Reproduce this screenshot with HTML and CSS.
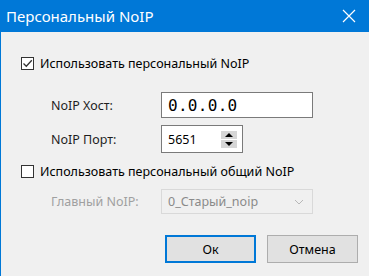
FILE: index.html
```html
<!DOCTYPE html>
<html lang="ru">
<head>
<meta charset="utf-8">
<link rel="stylesheet" href="styles.css">
</head>
<body>
<div class="window">
  <div class="titlebar">
    <span class="title">Персональный NoIP</span>
    <svg class="close" width="16" height="16" viewBox="0 0 16 16"><path d="M2 2 L14 14 M14 2 L2 14" stroke="#fff" stroke-width="1.2" fill="none"/></svg>
  </div>
  <div class="content">
    <label class="check-row first">
      <span class="checkbox"><svg width="11" height="11" viewBox="0 0 11 11"><path d="M1.5 5.5 L4.3 8.3 L9.8 2.2" stroke="#333" stroke-width="1.3" fill="none"/></svg></span>
      <span class="check-label">Использовать персональный NoIP</span>
    </label>
    <div class="field-row host">
      <span class="field-label">NoIP Хост:</span>
      <div class="input ip">0.0.0.0</div>
    </div>
    <div class="field-row port">
      <span class="field-label">NoIP Порт:</span>
      <div class="input spin">
        <span class="spin-value">5651</span>
        <div class="spin-buttons">
          <span class="spin-btn"><svg width="10" height="6" viewBox="0 0 10 6"><path d="M1 5 L5 1 L9 5 Z" fill="#000"/></svg></span>
          <span class="spin-btn"><svg width="10" height="6" viewBox="0 0 10 6"><path d="M1 1 L5 5 L9 1 Z" fill="#000"/></svg></span>
        </div>
      </div>
    </div>
    <label class="check-row second">
      <span class="checkbox"></span>
      <span class="check-label">Использовать персональный общий NoIP</span>
    </label>
    <div class="field-row combo-row">
      <span class="field-label disabled">Главный NoIP:</span>
      <div class="combo">
        <span class="combo-value">0_Старый_noip</span>
        <svg class="chevron" width="10" height="6" viewBox="0 0 10 6"><path d="M1 1 L5 5 L9 1" stroke="#b8b8b8" stroke-width="1" fill="none"/></svg>
      </div>
    </div>
    <div class="buttons">
      <button class="btn default">Ок</button>
      <button class="btn">Отмена</button>
    </div>
  </div>
</div>
</body>
</html>
```

FILE: styles.css
```css
html, body {
  margin: 0;
  padding: 0;
}
body {
  width: 369px;
  height: 276px;
  overflow: hidden;
  background: #f0f0f0;
  font-family: "Noto Sans", "Open Sans", sans-serif;
  font-size: 12px;
  color: #000;
}
.window {
  height: 276px;
  border-left: 1px solid #0078d7;
  box-sizing: border-box;
  display: flex;
  flex-direction: column;
}
.titlebar {
  height: 32px;
  flex: none;
  background: #0078d7;
  display: flex;
  align-items: center;
  justify-content: space-between;
  padding: 0 12px 0 6px;
  margin-left: -1px;
}
.title {
  color: #fff;
  font-size: 15px;
  font-family: "Noto Sans", sans-serif;
}
.close {
  display: block;
}
.content {
  display: flex;
  flex-direction: column;
  padding-left: 20px;
}
.check-row {
  display: flex;
  align-items: center;
  height: 13px;
  gap: 6px;
}
.check-row.first { margin-top: 25px; }
.check-row.second { margin-top: 12px; }
.checkbox {
  width: 13px;
  height: 13px;
  box-sizing: border-box;
  border: 1px solid #333;
  background: #fff;
  display: flex;
  align-items: center;
  justify-content: center;
}
.checkbox svg { display: block; }
.check-label {
  font-size: 12.5px;
  white-space: nowrap;
}
.field-row {
  display: flex;
  align-items: center;
}
.field-row.host { margin-top: 22px; }
.field-row.port { margin-top: 7px; }
.field-row.combo-row { margin-top: 11px; }
.field-label {
  width: 140px;
  padding-left: 30px;
  box-sizing: border-box;
  font-size: 12.5px;
  color: #1e1e1e;
  white-space: nowrap;
}
.field-label.disabled { color: #a0a0a0; }
.input {
  box-sizing: border-box;
  border: 1px solid #7a7a7a;
  background: #fff;
  display: flex;
  align-items: center;
}
.ip {
  width: 152px;
  height: 26px;
  padding-left: 6px;
  font-family: "DejaVu Sans Mono", monospace;
  font-size: 16px;
  letter-spacing: 0.3px;
}
.spin {
  width: 82px;
  height: 28px;
  padding-left: 6px;
  justify-content: space-between;
  padding-right: 5px;
}
.spin-value { font-size: 12.5px; }
.spin-buttons {
  display: flex;
  flex-direction: column;
  gap: 1px;
}
.spin-btn {
  width: 16px;
  height: 8px;
  background: #d6d6d6;
  display: flex;
  align-items: center;
  justify-content: center;
}
.spin-btn svg { display: block; }
.combo {
  width: 152px;
  height: 25px;
  box-sizing: border-box;
  border: 1px solid #d9d9d9;
  background: #f0f0f0;
  display: flex;
  align-items: center;
  justify-content: space-between;
  padding: 0 8px 0 6px;
  color: #8a8a8a;
  font-size: 12.5px;
}
.chevron { display: block; }
.buttons {
  display: flex;
  justify-content: flex-end;
  gap: 11px;
  margin-top: 21px;
  padding-right: 11px;
}
.btn {
  width: 91px;
  height: 28px;
  box-sizing: border-box;
  border: 1px solid #adadad;
  background: #e1e1e1;
  font-family: "Noto Sans", sans-serif;
  font-size: 12.5px;
  color: #000;
  padding: 0;
}
.btn.default {
  border: 2px solid #0078d7;
}
```
